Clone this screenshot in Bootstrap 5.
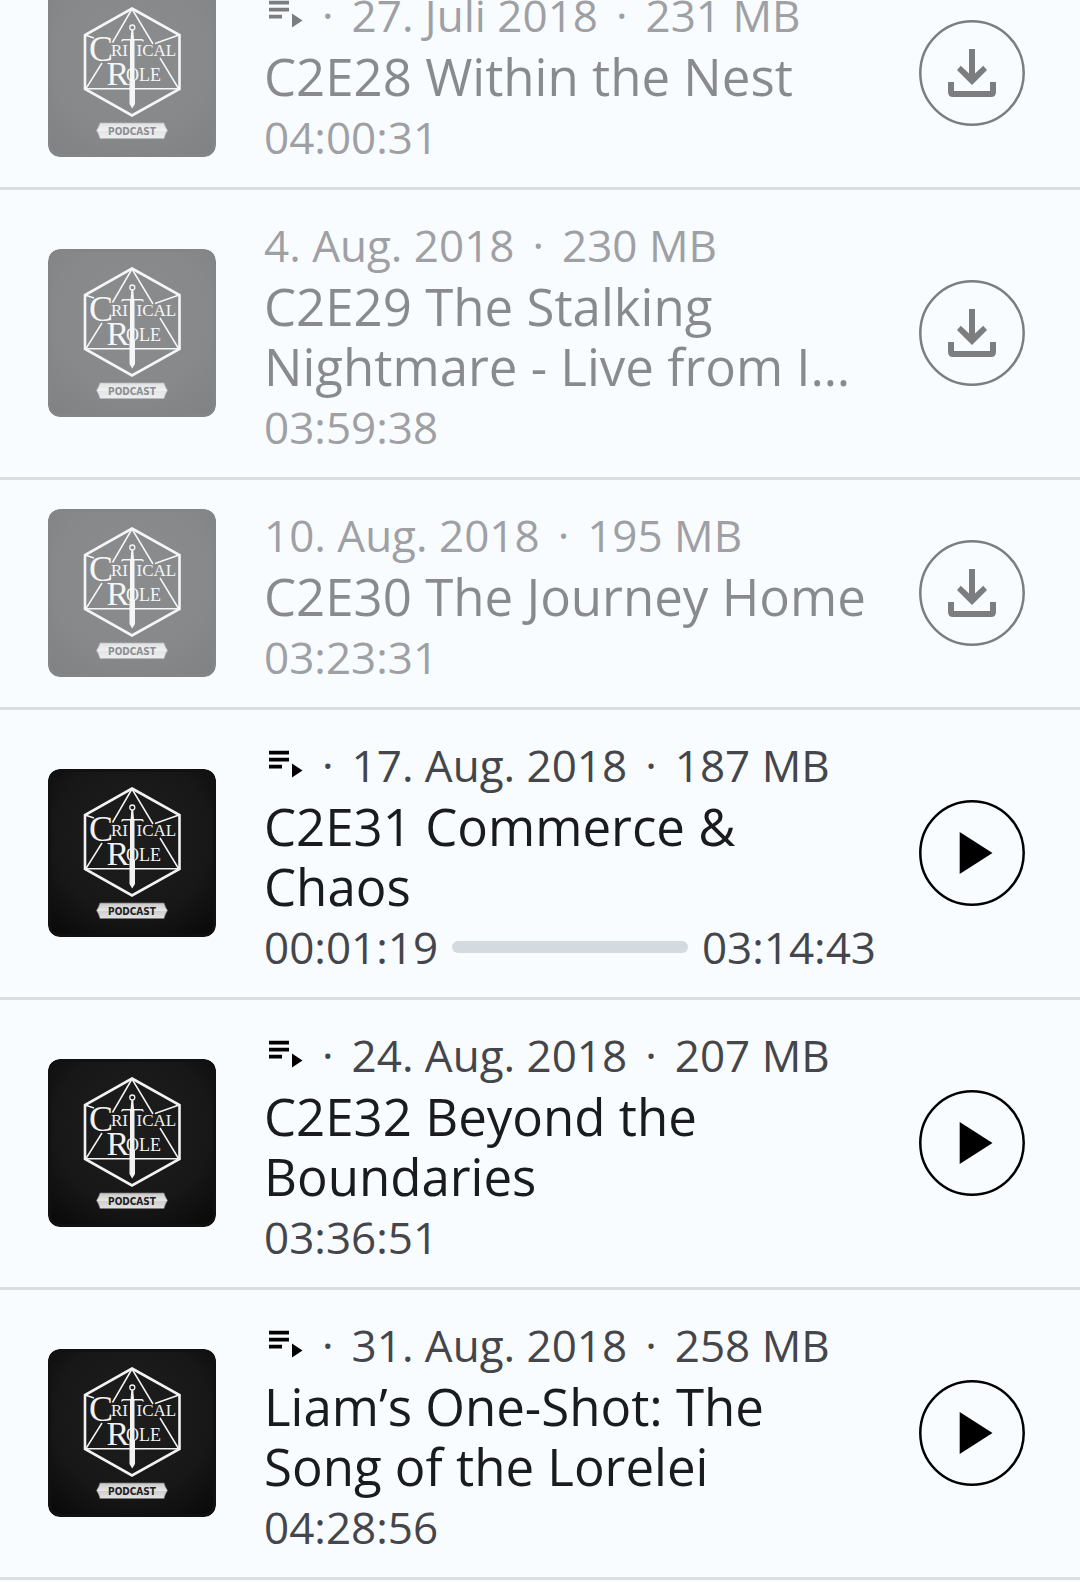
<!DOCTYPE html>
<html lang="de">
<head>
<meta charset="utf-8">
<meta name="viewport" content="width=device-width, initial-scale=1">
<title>Episoden</title>
<link href="https://cdn.jsdelivr.net/npm/bootstrap@5.3.0/dist/css/bootstrap.min.css" rel="stylesheet">
<style>
  body { background: #f9fcff; font-family: "Open Sans", "Noto Sans", sans-serif; color: #1a1b1f; }
  /* the list is scrolled a little way into its first episode */
  .episode-list { margin-top: -40px; }
  .episode { padding: 18px 36px 19px 48px; border-bottom: 3px solid #d9dee1; }
  .episode.remote > * { opacity: .5; }
  .cover { width: 168px; height: 168px; margin-right: 48px; border-radius: 12px; }
  .episode-info { min-width: 0; padding-top: 6px; }
  .info-line { font-size: 44px; line-height: 62px; color: #45464b; gap: 18px; white-space: nowrap; }
  .episode-title { font-size: 51px; line-height: 60px; font-weight: 400; }
  .queue-icon { width: 40px; height: 48px; }
  .play-bar { height: 12px; margin: 0 -4px; background: #d3dae0; border-radius: 6px; }
  .action { width: 106px; height: 106px; margin: 0 19px 0 43px; border: 0; padding: 0; background: none; color: #000; }
</style>
<script src="https://cdn.jsdelivr.net/npm/bootstrap@5.3.0/dist/js/bootstrap.bundle.min.js"></script>
</head>
<body>
<svg class="position-absolute" width="0" height="0" aria-hidden="true">
  <defs>
    <radialGradient id="slate" cx=".5" cy=".4" r=".75"><stop offset="0" stop-color="#1e1e1e"/><stop offset=".65" stop-color="#171717"/><stop offset="1" stop-color="#0a0a0a"/></radialGradient>
    <linearGradient id="plate" x2="0" y2="1"><stop offset="0" stop-color="#c6c6c6"/><stop offset=".48" stop-color="#e6e6e6"/><stop offset=".52" stop-color="#cfcfcf"/><stop offset="1" stop-color="#e2e2e2"/></linearGradient>
  </defs>
  <symbol id="art" viewBox="0 0 168 168">
    <rect width="168" height="168" rx="12" fill="#111"/>
    <rect x="3" y="3" width="162" height="162" rx="9" fill="url(#slate)"/>
    <g fill="none" stroke="#f2f2f2">
      <path d="M84 19.500 131.500 46V100L84 126.500 37 100V46Z" stroke-width="2.600"/>
      <path d="M84 20 64.500 53.500M84 20 105 55M131 46 107 54.500M37 46 46 49M54 74 38 99.500M112 69 130.500 99.500M37 99.700H131" stroke-width="1.500"/>
    </g>
    <g fill="#f2f2f2" font-family="Liberation Serif, serif">
      <text x="41" y="71.500" font-size="36">C</text>
      <text x="63" y="67" font-size="17">RI</text>
      <text x="88.500" y="67" font-size="17">ICAL</text>
      <text x="58.500" y="96" font-size="34">R</text>
      <text x="78" y="91.700" font-size="18">OLE</text>
      <circle cx="84.300" cy="38.500" r="2.500" fill="none" stroke="#f2f2f2" stroke-width="1.300"/>
      <path d="M83.300 41H85.300L86 50H94Q96 50 95.500 53L93.500 51.500H86.500V91H87V115L84.200 119.500 81.500 115V91H82V51.500H75.500L73.500 53Q73 50 75 50H82.600Z"/>
    </g>
    <path d="M52 134H116L117.500 138 119.500 141.500 117.500 145 116 149.500H52L50.500 145 48.500 141.500 50.500 138Z" fill="url(#plate)" stroke="#777" stroke-width=".7"/>
    <text x="84" y="145.700" text-anchor="middle" font-family="Liberation Sans Narrow, DejaVu Sans Condensed, sans-serif" font-size="10" font-weight="700" fill="#222">PODCAST</text>
  </symbol>
  <symbol id="queue" viewBox="0 0 40 48">
    <path d="M5 9.700H25V13.400H5ZM5 16.800H25V20.500H5ZM5 23.800H18V27.500H5ZM28 22.500 38.500 29.500 28 36.500Z"/>
  </symbol>
  <symbol id="play" viewBox="0 0 106 106">
    <circle cx="53" cy="53" r="51.700" fill="none" stroke="currentColor" stroke-width="2.500"/>
    <path d="M40.700 32V74L73.500 53Z" fill="currentColor"/>
  </symbol>
  <symbol id="download" viewBox="0 0 106 106">
    <circle cx="53" cy="53" r="51.700" fill="none" stroke="currentColor" stroke-width="2.500"/>
    <path d="M50 29H56V53.500L64.200 45.800 68 50 53 65 38 50 41.800 45.800 50 53.500ZM29 62H35V71H71V62H77V72Q77 77 72 77H34Q29 77 29 72Z" fill="currentColor"/>
  </symbol>
</svg>

<main class="overflow-hidden">
  <ul class="episode-list list-unstyled mb-0">
    <li class="episode remote d-flex align-items-center">
      <svg class="cover flex-shrink-0" role="img" aria-label="Critical Role Podcast"><use href="#art"/></svg>
      <div class="episode-info flex-grow-1">
        <div class="info-line d-flex align-items-center"><svg class="queue-icon" aria-hidden="true"><use href="#queue"/></svg><span>·</span><span>27. Juli 2018</span><span>·</span><span>231 MB</span></div>
        <h2 class="episode-title mb-0">C2E28 Within the Nest</h2>
        <div class="info-line">04:00:31</div>
      </div>
      <button class="action flex-shrink-0" type="button" aria-label="Herunterladen"><svg class="d-block w-100 h-100"><use href="#download"/></svg></button>
    </li>
    <li class="episode remote d-flex align-items-center">
      <svg class="cover flex-shrink-0" role="img" aria-label="Critical Role Podcast"><use href="#art"/></svg>
      <div class="episode-info flex-grow-1">
        <div class="info-line d-flex align-items-center"><span>4. Aug. 2018</span><span>·</span><span>230 MB</span></div>
        <h2 class="episode-title mb-0">C2E29 The Stalking Nightmare - Live from I…</h2>
        <div class="info-line">03:59:38</div>
      </div>
      <button class="action flex-shrink-0" type="button" aria-label="Herunterladen"><svg class="d-block w-100 h-100"><use href="#download"/></svg></button>
    </li>
    <li class="episode remote d-flex align-items-center">
      <svg class="cover flex-shrink-0" role="img" aria-label="Critical Role Podcast"><use href="#art"/></svg>
      <div class="episode-info flex-grow-1">
        <div class="info-line d-flex align-items-center"><span>10. Aug. 2018</span><span>·</span><span>195 MB</span></div>
        <h2 class="episode-title mb-0">C2E30 The Journey Home</h2>
        <div class="info-line">03:23:31</div>
      </div>
      <button class="action flex-shrink-0" type="button" aria-label="Herunterladen"><svg class="d-block w-100 h-100"><use href="#download"/></svg></button>
    </li>
    <li class="episode d-flex align-items-center">
      <svg class="cover flex-shrink-0" role="img" aria-label="Critical Role Podcast"><use href="#art"/></svg>
      <div class="episode-info flex-grow-1">
        <div class="info-line d-flex align-items-center"><svg class="queue-icon" aria-hidden="true"><use href="#queue"/></svg><span>·</span><span>17. Aug. 2018</span><span>·</span><span>187 MB</span></div>
        <h2 class="episode-title mb-0">C2E31 Commerce &amp; Chaos</h2>
        <div class="info-line d-flex align-items-center"><span>00:01:19</span><div class="play-bar progress flex-grow-1" role="progressbar" aria-label="Fortschritt" aria-valuenow="0" aria-valuemin="0" aria-valuemax="100"></div><span>03:14:43</span></div>
      </div>
      <button class="action flex-shrink-0" type="button" aria-label="Abspielen"><svg class="d-block w-100 h-100"><use href="#play"/></svg></button>
    </li>
    <li class="episode d-flex align-items-center">
      <svg class="cover flex-shrink-0" role="img" aria-label="Critical Role Podcast"><use href="#art"/></svg>
      <div class="episode-info flex-grow-1">
        <div class="info-line d-flex align-items-center"><svg class="queue-icon" aria-hidden="true"><use href="#queue"/></svg><span>·</span><span>24. Aug. 2018</span><span>·</span><span>207 MB</span></div>
        <h2 class="episode-title mb-0">C2E32 Beyond the Boundaries</h2>
        <div class="info-line">03:36:51</div>
      </div>
      <button class="action flex-shrink-0" type="button" aria-label="Abspielen"><svg class="d-block w-100 h-100"><use href="#play"/></svg></button>
    </li>
    <li class="episode d-flex align-items-center">
      <svg class="cover flex-shrink-0" role="img" aria-label="Critical Role Podcast"><use href="#art"/></svg>
      <div class="episode-info flex-grow-1">
        <div class="info-line d-flex align-items-center"><svg class="queue-icon" aria-hidden="true"><use href="#queue"/></svg><span>·</span><span>31. Aug. 2018</span><span>·</span><span>258 MB</span></div>
        <h2 class="episode-title mb-0">Liam’s One-Shot: The Song of the Lorelei</h2>
        <div class="info-line">04:28:56</div>
      </div>
      <button class="action flex-shrink-0" type="button" aria-label="Abspielen"><svg class="d-block w-100 h-100"><use href="#play"/></svg></button>
    </li>
  </ul>
</main>
</body>
</html>
